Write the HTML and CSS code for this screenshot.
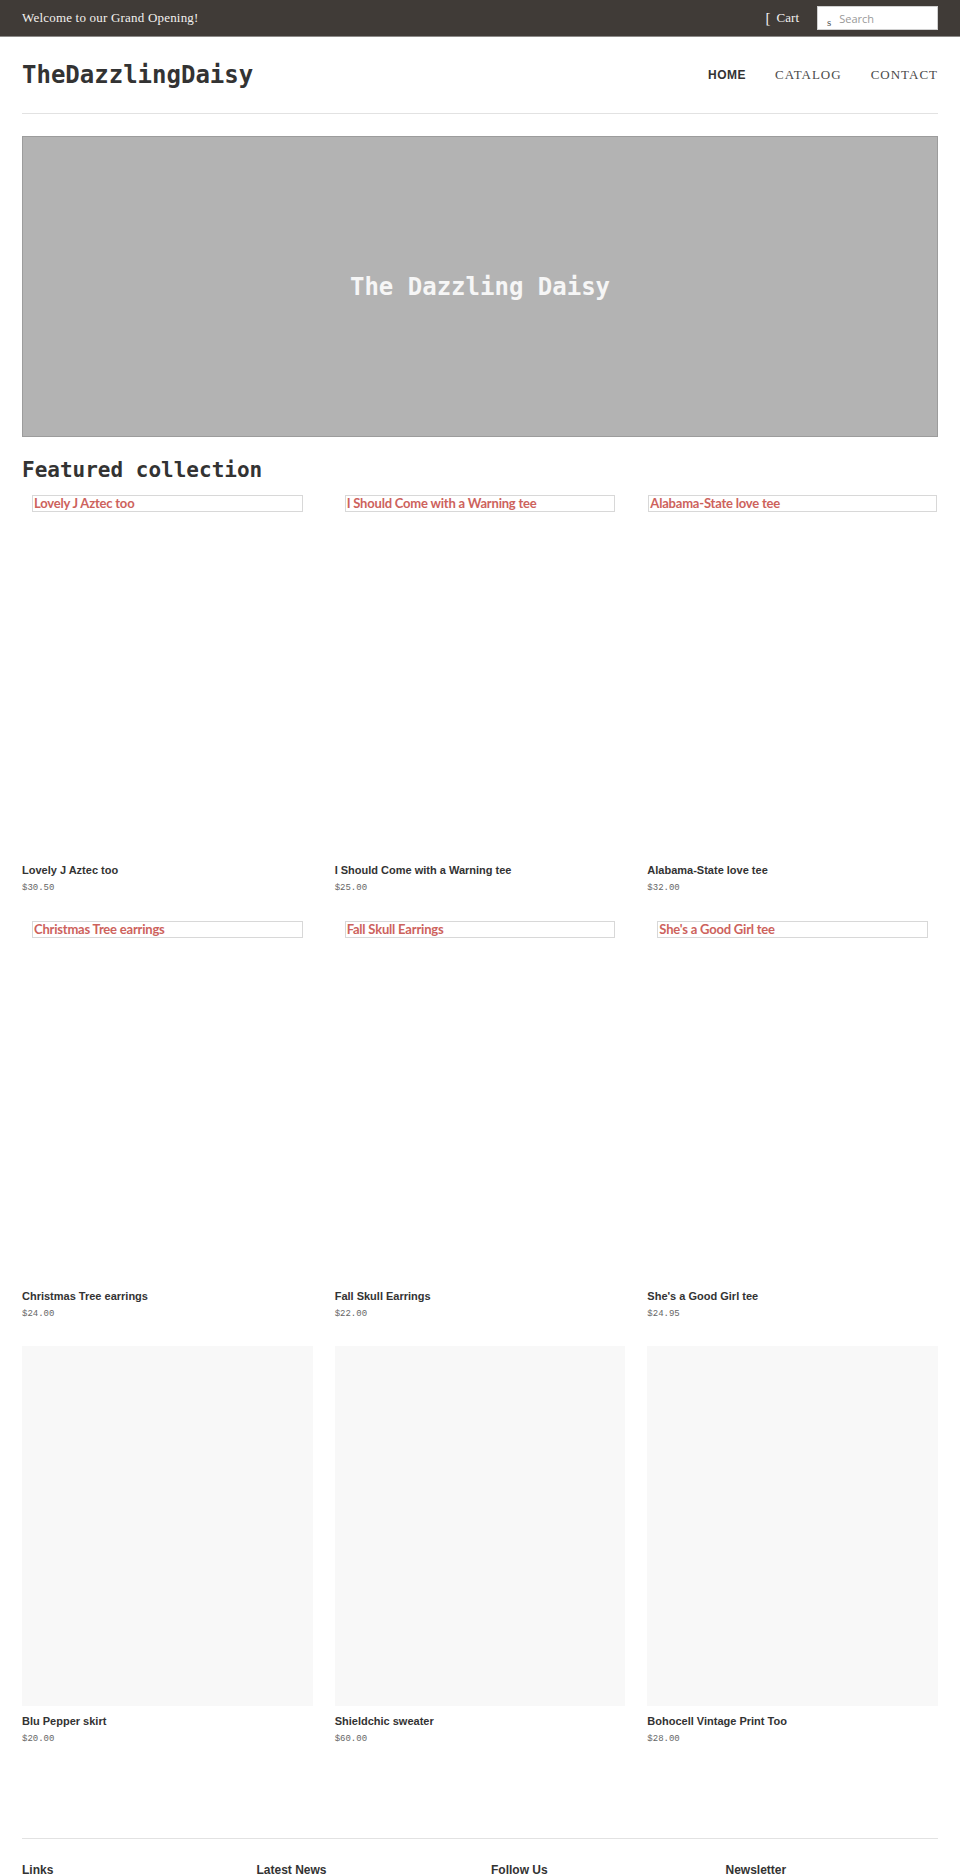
FILE: index.html
```
<!DOCTYPE html>
<html lang="en">

<head>
    <meta charset="UTF-8">
    <meta name="viewport" content="width=device-width, initial-scale=1.0">
    <title>TheDazzlingDaisy</title>
    <link rel="stylesheet" href="styles.css">
</head>

<body>
    <div class="topbar">
        <p class="welcome">Welcome to our Grand Opening!</p>
        <div class="top-actions">
            <a class="cart" href="#"><span class="cart-icon">[</span>Cart</a>
            <form class="search">
                <span class="search-icon">s</span>
                <input class="search-input" type="search" placeholder="Search">
            </form>
        </div>
    </div>

    <div class="page">
        <header class="header">
            <a class="logo" href="#">TheDazzlingDaisy</a>
            <nav class="nav">
                <a class="nav-link active" href="#">HOME</a>
                <a class="nav-link" href="#">CATALOG</a>
                <a class="nav-link" href="#">CONTACT</a>
            </nav>
        </header>

        <div class="hero">
            <h1 class="hero-title">The Dazzling Daisy</h1>
        </div>

        <h2 class="section-title">Featured collection</h2>

        <ul class="products">
            <li class="product">
                <div class="product-img"><span class="alt">Lovely J Aztec too</span></div>
                <h3 class="product-name">Lovely J Aztec too</h3>
                <p class="product-price">$30.50</p>
            </li>
            <li class="product">
                <div class="product-img"><span class="alt">I Should Come with a Warning tee</span></div>
                <h3 class="product-name">I Should Come with a Warning tee</h3>
                <p class="product-price">$25.00</p>
            </li>
            <li class="product">
                <div class="product-img"><span class="alt alt-wide">Alabama-State love tee</span></div>
                <h3 class="product-name">Alabama-State love tee</h3>
                <p class="product-price">$32.00</p>
            </li>
            <li class="product">
                <div class="product-img"><span class="alt">Christmas Tree earrings</span></div>
                <h3 class="product-name">Christmas Tree earrings</h3>
                <p class="product-price">$24.00</p>
            </li>
            <li class="product">
                <div class="product-img"><span class="alt">Fall Skull Earrings</span></div>
                <h3 class="product-name">Fall Skull Earrings</h3>
                <p class="product-price">$22.00</p>
            </li>
            <li class="product">
                <div class="product-img"><span class="alt">She's a Good Girl tee</span></div>
                <h3 class="product-name">She's a Good Girl tee</h3>
                <p class="product-price">$24.95</p>
            </li>
            <li class="product">
                <div class="product-img empty"></div>
                <h3 class="product-name">Blu Pepper skirt</h3>
                <p class="product-price">$20.00</p>
            </li>
            <li class="product">
                <div class="product-img empty"></div>
                <h3 class="product-name">Shieldchic sweater</h3>
                <p class="product-price">$60.00</p>
            </li>
            <li class="product">
                <div class="product-img empty"></div>
                <h3 class="product-name">Bohocell Vintage Print Too</h3>
                <p class="product-price">$28.00</p>
            </li>
        </ul>

        <footer class="footer">
            <div class="footer-col"><h4>Links</h4></div>
            <div class="footer-col"><h4>Latest News</h4></div>
            <div class="footer-col"><h4>Follow Us</h4></div>
            <div class="footer-col"><h4>Newsletter</h4></div>
        </footer>
    </div>
</body>

</html>
```

FILE: styles.css
```
html,
body {
    padding: 0;
    margin: 0;
}

body {
    font-family: "Liberation Sans", Arial, sans-serif;
    color: #333;
    background: #fff;
}

a {
    text-decoration: none;
    color: inherit;
}

ul {
    margin: 0;
    padding: 0;
}

li {
    list-style: none;
}

h1, h2, h3, h4, p {
    margin: 0;
}

/* top announcement bar */
.topbar {
    display: flex;
    justify-content: space-between;
    align-items: center;
    height: 36px;
    padding: 0 22px;
    background: #403b37;
    border-bottom: 1px solid #8c8a88;
}

.welcome {
    font-family: "Liberation Serif", serif;
    font-size: 13px;
    letter-spacing: 0.2px;
    color: #f2f0ee;
}

.top-actions {
    display: flex;
    align-items: center;
    gap: 18px;
}

.cart {
    display: flex;
    align-items: center;
    font-family: "Liberation Serif", serif;
    font-size: 13px;
    color: #f2f0ee;
}

.cart-icon {
    font-size: 15px;
    margin-right: 6px;
}

.search {
    display: flex;
    align-items: center;
    margin: 0;
    width: 119px;
    height: 22px;
    background: #fff;
    border: 1px solid #d0d0d0;
}

.search-icon {
    font-family: "Liberation Serif", serif;
    font-size: 11px;
    color: #555;
    margin: 8px 0 0 9px;
}

.search-input {
    width: 80px;
    border: 0;
    outline: 0;
    padding: 0;
    margin-left: 8px;
    background: transparent;
    font-family: "Open Sans", sans-serif;
    font-size: 11px;
    color: #555;
    -webkit-appearance: none;
}

.search-input::placeholder {
    color: #999;
}

.page {
    padding: 0 22px;
}

/* logo + main nav */
.header {
    display: flex;
    justify-content: space-between;
    align-items: center;
    padding: 23px 0;
    border-bottom: 1px solid #e2e2e2;
}

.logo {
    font-family: "DejaVu Sans Mono", monospace;
    font-weight: bold;
    font-size: 24px;
    line-height: 30px;
    color: #333;
}

.nav {
    display: flex;
    align-items: center;
    gap: 29px;
}

.nav-link {
    font-family: "Liberation Serif", serif;
    font-size: 13px;
    letter-spacing: 1px;
    color: #4a4a4a;
}

.nav-link.active {
    font-family: "Liberation Sans", Arial, sans-serif;
    font-weight: bold;
    font-size: 12px;
    letter-spacing: 0.5px;
    color: #333;
}

/* slideshow placeholder */
.hero {
    display: flex;
    justify-content: center;
    align-items: center;
    box-sizing: border-box;
    height: 301px;
    margin-top: 22px;
    background: #b3b3b3;
    border: 1px solid #9c9c9c;
}

.hero-title {
    font-family: "DejaVu Sans Mono", monospace;
    font-weight: bold;
    font-size: 24px;
    color: #f6f6f6;
}

.section-title {
    margin-top: 19px;
    font-family: "DejaVu Sans Mono", monospace;
    font-weight: bold;
    font-size: 21px;
    line-height: 28px;
    color: #333;
}

/* product grid */
.products {
    display: grid;
    grid-template-columns: repeat(3, 1fr);
    column-gap: 22px;
    margin-top: 10px;
}

.product {
    padding-bottom: 24px;
}

.product-img {
    height: 360px;
    padding: 1px 10px 0;
}

.product-img.empty {
    padding: 0;
    background: #f8f8f8;
}

.alt {
    display: block;
    box-sizing: border-box;
    height: 17px;
    padding-left: 1px;
    border: 1px solid #d8d8d8;
    font-family: Lato, "Open Sans", sans-serif;
    font-weight: bold;
    font-size: 13px;
    line-height: 14px;
    letter-spacing: -0.2px;
    color: #cd625c;
    white-space: nowrap;
    overflow: hidden;
}

.alt-wide {
    margin: 0 -9px;
}

.product-name {
    margin-top: 7px;
    font-size: 11px;
    line-height: 16px;
    font-weight: bold;
    color: #333;
}

.product-price {
    margin-top: 2px;
    font-family: "Liberation Mono", monospace;
    font-size: 9px;
    line-height: 16px;
    color: #666;
}

/* footer */
.footer {
    display: grid;
    grid-template-columns: repeat(4, 1fr);
    column-gap: 22px;
    margin-top: 67px;
    padding-top: 23px;
    border-top: 1px solid #e2e2e2;
}

.footer-col h4 {
    font-size: 12px;
    line-height: 16px;
    font-weight: bold;
    color: #333;
}
```
